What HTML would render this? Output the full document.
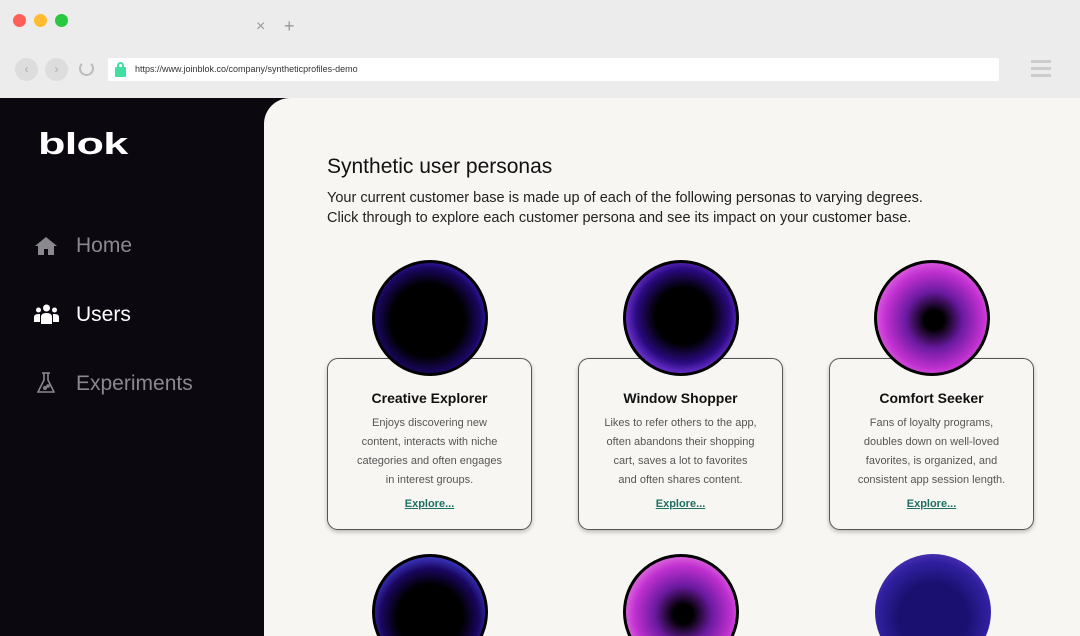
<!DOCTYPE html>
<html style="overflow:hidden"><head><meta charset="utf-8"><style>
*{margin:0;padding:0;box-sizing:border-box}
html,body{width:1080px;height:636px;overflow:hidden}
body{background:#ececec;font-family:"Liberation Sans",sans-serif;position:relative}
.dot{position:absolute;top:14px;width:13px;height:13px;border-radius:50%}
.side{position:absolute;left:0;top:98px;width:290px;height:538px;background:#0b0810}
.main{position:absolute;left:264px;top:98px;width:816px;height:538px;background:#f7f6f2;border-top-left-radius:26px}
.nav{position:absolute;left:76px;font-size:21px;color:#8a898d}
.card{position:absolute;top:358px;width:205px;height:172px;border:1.5px solid #555;border-radius:11px;background:#f7f6f2;box-shadow:0 2px 4px rgba(0,0,0,.25);text-align:center}
.card h3{margin-top:31px;font-size:14px;color:#111}
.card p{margin-top:8px;font-size:11px;line-height:19px;color:#555}
.card a{display:block;margin-top:8px;font-size:11px;font-weight:bold;color:#1f6f63;text-decoration:underline}
.orb{position:absolute;width:116px;height:116px;border-radius:50%;border:3px solid #000;z-index:2}
.bot{position:absolute;top:554px;width:116px;height:82px;overflow:hidden;z-index:2}
.bot .orb{left:0;top:0}
</style></head><body>
<div class="dot" style="left:13px;background:#fe5f57"></div>
<div class="dot" style="left:34px;background:#febc2e"></div>
<div class="dot" style="left:55px;background:#28c840"></div>
<div style="position:absolute;left:256px;top:18px;color:#999;font-size:16px">×</div>
<div style="position:absolute;left:284px;top:16px;color:#999;font-size:18px">+</div>
<div style="position:absolute;left:15px;top:58px;width:23px;height:23px;border-radius:50%;background:#ddd;color:#aaa;font-size:12px;text-align:center;line-height:23px">‹</div>
<div style="position:absolute;left:45px;top:58px;width:23px;height:23px;border-radius:50%;background:#ddd;color:#aaa;font-size:12px;text-align:center;line-height:23px">›</div>
<div style="position:absolute;left:79px;top:61px;width:15px;height:15px;border-radius:50%;border:2px solid #bbb;border-top-color:transparent"></div>
<div style="position:absolute;left:108px;top:58px;width:891px;height:23px;background:#fff;border-radius:2px"></div>
<div style="position:absolute;left:115px;top:67px;width:11px;height:10px;background:#3fe0a0;border-radius:1px"></div>
<div style="position:absolute;left:117px;top:62px;width:7px;height:8px;border:2px solid #3fe0a0;border-bottom:none;border-radius:4px 4px 0 0"></div>
<div style="position:absolute;left:135px;top:64px;font-size:9px;color:#333">https://www.joinblok.co/company/syntheticprofiles-demo</div>
<div style="position:absolute;left:1031px;top:60px;width:20px;height:3px;background:#ccc;box-shadow:0 7px 0 #ccc,0 14px 0 #ccc"></div>
<div class="side">
<div style="position:absolute;left:38px;top:28px;font-size:31px;font-weight:bold;color:#fff;letter-spacing:-0.5px;transform:scaleX(1.45);transform-origin:left">blok</div>
<div style="position:absolute;left:34px;top:138px;width:24px;height:20px">
<svg width="24" height="20" viewBox="0 0 24 20"><path d="M12 1 L1 10 L4 10 L4 19 L10 19 L10 13 L14 13 L14 19 L20 19 L20 10 L23 10 Z" fill="#8a898d"/></svg></div>
<div class="nav" style="top:136px">Home</div>
<div style="position:absolute;left:34px;top:206px"><svg width="25" height="20" viewBox="0 0 25 20" fill="#fff"><circle cx="12.5" cy="4" r="3.5"/><circle cx="4.5" cy="6" r="2.5"/><circle cx="20.5" cy="6" r="2.5"/><path d="M7 20 L7 13 Q7 9 12.5 9 Q18 9 18 13 L18 20Z"/><path d="M0 18 L0 13 Q0 10 4.5 10 L6 10 L6 18Z"/><path d="M25 18 L25 13 Q25 10 20.5 10 L19 10 L19 18Z"/></svg></div>
<div class="nav" style="top:205px;color:#fff">Users</div>
<div style="position:absolute;left:37px;top:274px"><svg width="18" height="22" viewBox="0 0 18 22" fill="none" stroke="#8a898d" stroke-width="1.6"><path d="M5 1h8M7 1v7L1 20h16L11 8V1"/><circle cx="8" cy="16" r="1.2"/><circle cx="11" cy="14" r="1"/></svg></div>
<div class="nav" style="top:274px">Experiments</div>
</div>
<div class="main">
<div style="position:absolute;left:63px;top:57px;font-size:21px;color:#111">Synthetic user personas</div>
<div style="position:absolute;left:63px;top:90px;font-size:14.5px;line-height:20px;color:#222">Your current customer base is made up of each of the following personas to varying degrees.<br>Click through to explore each customer persona and see its impact on your customer base.</div>
</div>
<div class="orb" style="left:372px;top:260px;background:radial-gradient(circle at 48% 52%,#000 45%,#1a0660 65%,#4b2cf0 82%,#000 98%)"></div>
<div class="orb" style="left:623px;top:260px;background:radial-gradient(circle at 52% 48%,#000 35%,#2a0a80 58%,#7a3ae0 75%,#3a90e0 87%,#000 98%)"></div>
<div class="orb" style="left:874px;top:260px;background:radial-gradient(circle at 52% 52%,#000 12%,#6a1aa0 35%,#c030d0 60%,#e060e0 75%,#2a60c0 88%,#000 98%)"></div>
<div class="card" style="left:327px"><h3>Creative Explorer</h3><p>Enjoys discovering new<br>content, interacts with niche<br>categories and often engages<br>in interest groups.</p><a>Explore...</a></div>
<div class="card" style="left:578px"><h3>Window Shopper</h3><p>Likes to refer others to the app,<br>often abandons their shopping<br>cart, saves a lot to favorites<br>and often shares content.</p><a>Explore...</a></div>
<div class="card" style="left:829px"><h3>Comfort Seeker</h3><p>Fans of loyalty programs,<br>doubles down on well-loved<br>favorites, is organized, and<br>consistent app session length.</p><a>Explore...</a></div>
<div class="bot" style="left:372px"><div class="orb" style="background:radial-gradient(circle at 50% 55%,#000 40%,#1a0660 60%,#4b50f0 82%,#000 98%)"></div></div>
<div class="bot" style="left:623px"><div class="orb" style="background:radial-gradient(circle at 52% 52%,#000 12%,#6a1aa0 35%,#c030d0 60%,#e070e0 75%,#2a60c0 88%,#000 98%)"></div></div>
<div class="bot" style="left:875px"><div class="orb" style="border:none;background:radial-gradient(circle at 50% 55%,#1a1070 40%,#3020a0 65%,#6040c0 85%,#3080e0 100%)"></div></div>
</body></html>
